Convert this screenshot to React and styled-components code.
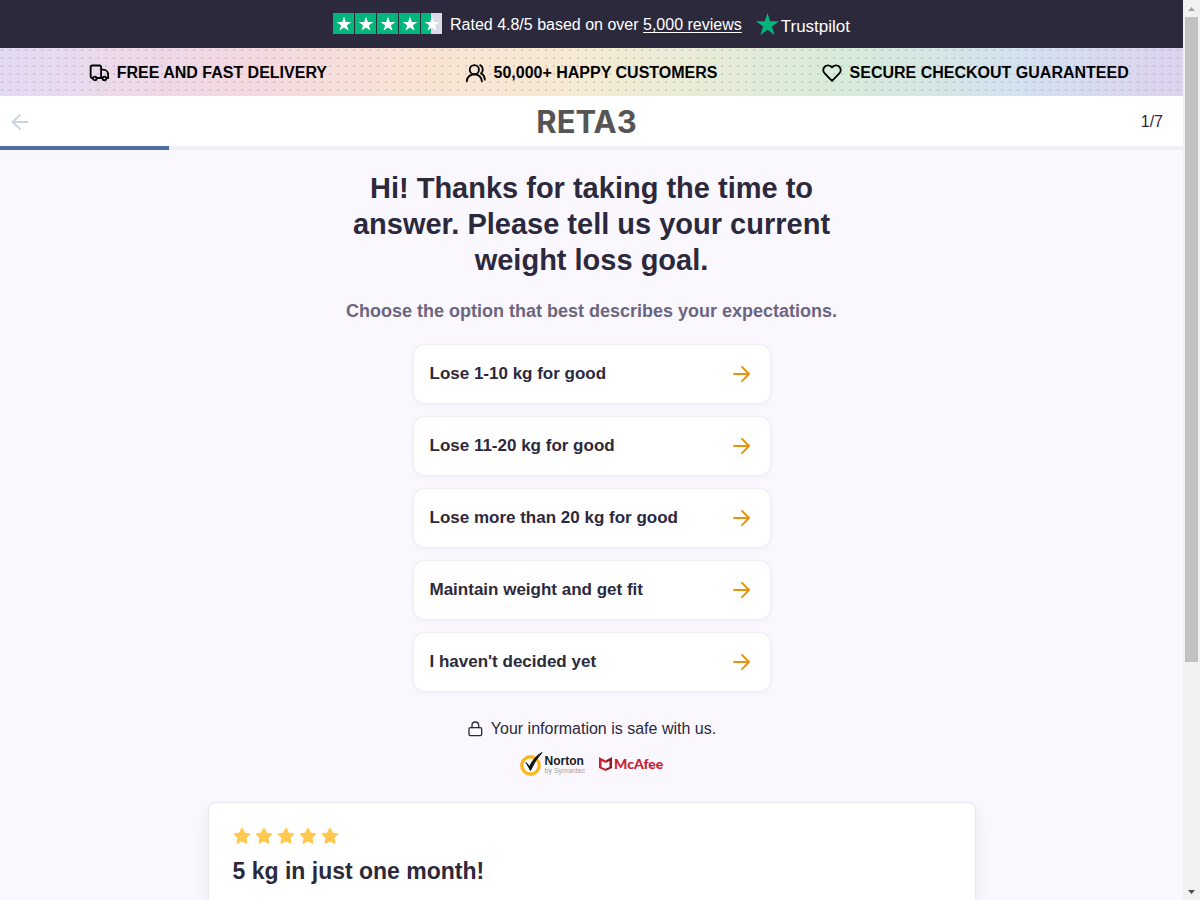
import React from 'react';

import styled, { createGlobalStyle } from 'styled-components';

const GlobalStyle = createGlobalStyle`
  *,
  *::before,
  *::after {
    box-sizing: border-box;
  }

  body {
    margin: 0;
    color: #2d293d;
    background-color: #faf8fe;
    font-family: 'Liberation Sans', Arial, sans-serif;
    font-size: 16px;
    line-height: 24px;
  }

  button {
    font: inherit;
    color: inherit;
    cursor: pointer;
  }
`;

const Shell = styled.div`
  display: grid;
  grid-template-columns: minmax(0, 1fr) 17px;
  height: 100vh;
  overflow: hidden;
`;

const Page = styled.div`
  min-width: 0;
  overflow: hidden;
`;

const RatingBar = styled.div`
  display: flex;
  align-items: center;
  justify-content: center;
  height: 48px;
  color: #ffffff;
  background-color: #2d293d;

  a {
    color: inherit;
    text-underline-offset: 2px;
  }
`;

const RatingText = styled.p`
  margin: 0 14px 0 8px;
  padding-top: 2px;
`;

const Trustpilot = styled.span`
  display: flex;
  align-items: center;
  gap: 2px;
  padding-top: 6px;
  font-size: 17px;

  svg {
    margin-bottom: 6px;
  }
`;

const PerksBar = styled.ul`
  display: grid;
  grid-template-columns: repeat(3, 1fr);
  margin: 0;
  padding: 0 16px;
  list-style: none;
  color: #000000;
  background-image: radial-gradient(
      circle at 2px 2px,
      rgba(90, 80, 120, 0.16) 1px,
      transparent 1px
    ),
    linear-gradient(
      100deg,
      #e4daf3 0%,
      #f3d8e1 20%,
      #f9e3d3 36%,
      #f5ebd4 50%,
      #d8ecd9 70%,
      #d3e0f0 87%,
      #ded2ee 100%
    );
  background-size: 8px 8px, 100% 100%;
`;

const Perk = styled.li`
  display: flex;
  align-items: center;
  justify-content: center;
  gap: 8px;
  height: 48px;
  padding-top: 2px;
  font-weight: 700;
  white-space: nowrap;
`;

const Header = styled.header`
  display: grid;
  grid-template-columns: 1fr auto 1fr;
  align-items: center;
  height: 50px;
  padding: 2px 20px 0 10px;
  background-color: #ffffff;
`;

const BackButton = styled.button`
  display: flex;
  justify-self: start;
  padding: 0;
  border: 0;
  color: #cbd5e0;
  background: none;
`;

const Logo = styled.span`
  color: #555555;
  font-family: Inter, sans-serif;
  font-size: 31px;
  font-weight: 700;
  line-height: 48px;
`;

const StepCount = styled.span`
  justify-self: end;
`;

const Progress = styled.div`
  height: 4px;
  background-color: #edf0f6;
`;

const ProgressFill = styled.div`
  height: 4px;
  background-color: #4c6ea5;
`;

const Quiz = styled.main`
  display: flex;
  flex-direction: column;
  align-items: center;
  padding: 20px 16px 0;
`;

const Title = styled.h1`
  max-width: 512px;
  margin: 0;
  font-size: 29px;
  font-weight: 700;
  line-height: 36px;
  text-align: center;
`;

const Subtitle = styled.h2`
  margin: 19px 0 0;
  color: #6c6580;
  font-size: 18px;
  font-weight: 700;
  line-height: 28px;
  text-align: center;
`;

const Options = styled.div`
  display: flex;
  flex-direction: column;
  gap: 12px;
  width: 100%;
  max-width: 358px;
  margin-top: 19px;
`;

const Option = styled.button`
  display: flex;
  align-items: center;
  justify-content: space-between;
  height: 60px;
  padding: 0 18px 0 16px;
  border: 1px solid #f0eff5;
  border-radius: 12px;
  background-color: #ffffff;
  box-shadow: 0 1px 4px rgba(45, 41, 61, 0.05);
  font-size: 17px;
  font-weight: 700;
  text-align: left;

  svg {
    color: #e8930c;
  }
`;

const SafeNote = styled.p`
  display: flex;
  align-items: center;
  gap: 8px;
  margin: 25px 0 0;
`;

const Seals = styled.div`
  display: flex;
  align-items: center;
  gap: 14px;
  height: 24px;
  margin-top: 11px;
`;

const Seal = styled.div`
  display: flex;
  align-items: center;
  gap: 2px;
`;

const NortonName = styled.div`
  color: #1b1b1b;
  font-size: 12px;
  font-weight: 700;
  line-height: 12px;

  small {
    display: block;
    color: #a3a3a8;
    font-size: 7px;
    font-weight: 400;
    line-height: 7px;
  }
`;

const McAfeeName = styled.span`
  color: #c8202f;
  font-family: Lato, sans-serif;
  font-size: 14px;
  font-weight: 900;
  line-height: 16px;
`;

const Review = styled.article`
  width: 100%;
  max-width: 768px;
  margin-top: 26px;
  padding: 24px;
  border: 1px solid #e8e8f1;
  border-radius: 8px;
  background-color: #ffffff;
  box-shadow: 0 10px 15px rgba(45, 41, 61, 0.08);
`;

const Stars = styled.div`
  display: flex;
  gap: 4px;
  height: 18px;
`;

const ReviewTitle = styled.h3`
  margin: 10px 0 200px;
  font-size: 23px;
  font-weight: 700;
  line-height: 32px;
`;

const Scrollbar = styled.div`
  display: grid;
  grid-template-rows: 17px minmax(0, 1fr) 17px;
  background-color: #f1f1f1;
`;

const ScrollArrow = styled.span`
  display: grid;
  place-items: center;
  color: ${props => (props.$dim ? '#a3a3a3' : '#505050')};
`;

const ScrollThumb = styled.div`
  height: 74.5%;
  margin: 0 2px;
  background-color: #c1c1c1;
`;

const STAR = 'M11 3.6 12.8 9h5.600l-4.500 3.300 1.700 5.400L11 14.400l-4.600 3.300 1.700-5.400L3.600 9h5.600z';

const answers = [
  'Lose 1-10 kg for good',
  'Lose 11-20 kg for good',
  'Lose more than 20 kg for good',
  'Maintain weight and get fit',
  "I haven't decided yet",
];

function Icon({ size = 20, stroke = 2, children }) {
  return (
    <svg
      width={size}
      height={size}
      viewBox="0 0 24 24"
      fill="none"
      stroke="currentColor"
      strokeWidth={stroke}
      strokeLinecap="round"
      strokeLinejoin="round"
      aria-hidden="true"
    >
      {children}
    </svg>
  );
}

function RatingStars() {
  return (
    <svg width="109" height="22" viewBox="0 0 109 22" role="img" aria-label="4.5 of 5 stars">
      {[0, 22, 44, 66, 88].map(x => (
        <g key={x} transform={`translate(${x} 0)`}>
          <rect width="21" height="21" fill={x === 88 ? '#dcdce6' : '#00b67a'} />
          {x === 88 && <rect width="10" height="21" fill="#00b67a" />}
          <path d={STAR} fill="#ffffff" />
        </g>
      ))}
    </svg>
  );
}

function App() {
  return (
    <>
      <GlobalStyle />
      <Shell>
        <Page>
          <RatingBar>
            <RatingStars />
            <RatingText>
              Rated 4.8/5 based on over <a href="#reviews">5,000 reviews</a>
            </RatingText>
            <Trustpilot>
              <svg width="23" height="22" viewBox="0 0 23 22" aria-hidden="true">
                <path
                  d="M11.5 0 14.2 8.3H23l-7.1 5.2L18.6 22l-7.1-5.2L4.400 22l2.700-8.500L0 8.300h8.800z"
                  fill="#00b67a"
                />
              </svg>
              Trustpilot
            </Trustpilot>
          </RatingBar>

          <PerksBar>
            <Perk>
              <Icon stroke={2.2}>
                <path d="M4.500 18H3.500A1.500 1.500 0 0 1 2 16.500V5a2 2 0 0 1 2-2h8.500a2 2 0 0 1 2 2v13H9M14.500 8H17a6 6 0 0 1 6 6v4h-2" />
                <circle cx="7" cy="18.5" r="2.2" />
                <circle cx="18.5" cy="18.5" r="2.2" />
              </Icon>
              FREE AND FAST DELIVERY
            </Perk>
            <Perk>
              <Icon stroke={2.2}>
                <circle cx="10" cy="8" r="5.5" />
                <path d="M1 22c0-5 4-8.500 9-8.500s9 3.500 9 8.500M17 2.500c4 2 4 7.500 1 10 3 1.500 4.500 4 4.500 7.500" />
              </Icon>
              50,000+ HAPPY CUSTOMERS
            </Perk>
            <Perk>
              <Icon stroke={2.2}>
                <path d="M12 21.500 3.200 12.500a5.600 5.600 0 0 1 0-8 5.600 5.600 0 0 1 8 0l.8.8.8-.8a5.600 5.600 0 0 1 8 0 5.600 5.600 0 0 1 0 8z" />
              </Icon>
              SECURE CHECKOUT GUARANTEED
            </Perk>
          </PerksBar>

          <Header>
            <BackButton type="button" aria-label="Back">
              <Icon stroke={2.4}>
                <path d="M21 12H3m9-8.500L3 12l9 8.500" />
              </Icon>
            </BackButton>
            <Logo>RETA3</Logo>
            <StepCount>1/7</StepCount>
          </Header>
          <Progress
            role="progressbar"
            aria-label="Quiz progress"
            aria-valuenow={1}
            aria-valuemax={7}
          >
            <ProgressFill style={{ width: `${100 / 7}%` }} />
          </Progress>

          <Quiz>
            <Title>
              Hi! Thanks for taking the time to answer. Please tell us your
              current weight loss goal.
            </Title>
            <Subtitle>
              Choose the option that best describes your expectations.
            </Subtitle>
            <Options>
              {answers.map(answer => (
                <Option key={answer} type="button">
                  {answer}
                  <Icon stroke={2.4}>
                    <path d="M2.500 12h18M12 3.500l8.500 8.500-8.500 8.500" />
                  </Icon>
                </Option>
              ))}
            </Options>
            <SafeNote>
              <Icon size={16}>
                <rect x="3" y="10" width="19" height="12" rx="2" />
                <path d="M7.500 10V6.500a5 5 0 0 1 10 0V10" />
              </Icon>
              Your information is safe with us.
            </SafeNote>
            <Seals>
              <Seal>
                <svg width="23" height="24" viewBox="0 0 23 24" aria-hidden="true">
                  <circle cx="10.5" cy="13.500" r="8.700" fill="#ffffff" stroke="#fbb81b" strokeWidth="3.400" />
                  <path d="M6 10.500 9.500 14.500Q14 5 22 .5 15 8 10.500 18.500z" fill="#111111" stroke="#111111" />
                </svg>
                <NortonName>
                  Norton
                  <small>by Symantec</small>
                </NortonName>
              </Seal>
              <Seal>
                <svg width="13" height="14" viewBox="0 0 13 14" aria-hidden="true">
                  <path d="M0 0 6.500 3.500V6L2.500 4v6l4 1.800V14L0 11z" fill="#c8202f" />
                  <path d="M13 0 6.500 3.500V6l4-2v6l-4 1.800V14L13 11z" fill="#8b1a26" />
                </svg>
                <McAfeeName>McAfee</McAfeeName>
              </Seal>
            </Seals>

            <Review id="reviews">
              <Stars role="img" aria-label="5 of 5 stars">
                {[1, 2, 3, 4, 5].map(star => (
                  <svg key={star} width="18" height="18" viewBox="0 0 18 18">
                    <path
                      d="M9 2 11.200 6.600 16 7.200 12.500 10.600 13.400 15.700 9 13.300 4.600 15.700 5.500 10.600 2 7.200 6.800 6.600z"
                      fill="#ffc850"
                      stroke="#ffc850"
                      strokeWidth="2"
                      strokeLinejoin="round"
                    />
                  </svg>
                ))}
              </Stars>
              <ReviewTitle>5 kg in just one month!</ReviewTitle>
            </Review>
          </Quiz>
        </Page>

        <Scrollbar aria-hidden="true">
          <ScrollArrow $dim>
            <svg width="7" height="4" viewBox="0 0 7 4">
              <path d="M0 4 3.5 0 7 4z" fill="currentColor" />
            </svg>
          </ScrollArrow>
          <ScrollThumb />
          <ScrollArrow>
            <svg width="7" height="4" viewBox="0 0 7 4">
              <path d="M0 0 3.5 4 7 0z" fill="currentColor" />
            </svg>
          </ScrollArrow>
        </Scrollbar>
      </Shell>
    </>
  );
}

export default App;
